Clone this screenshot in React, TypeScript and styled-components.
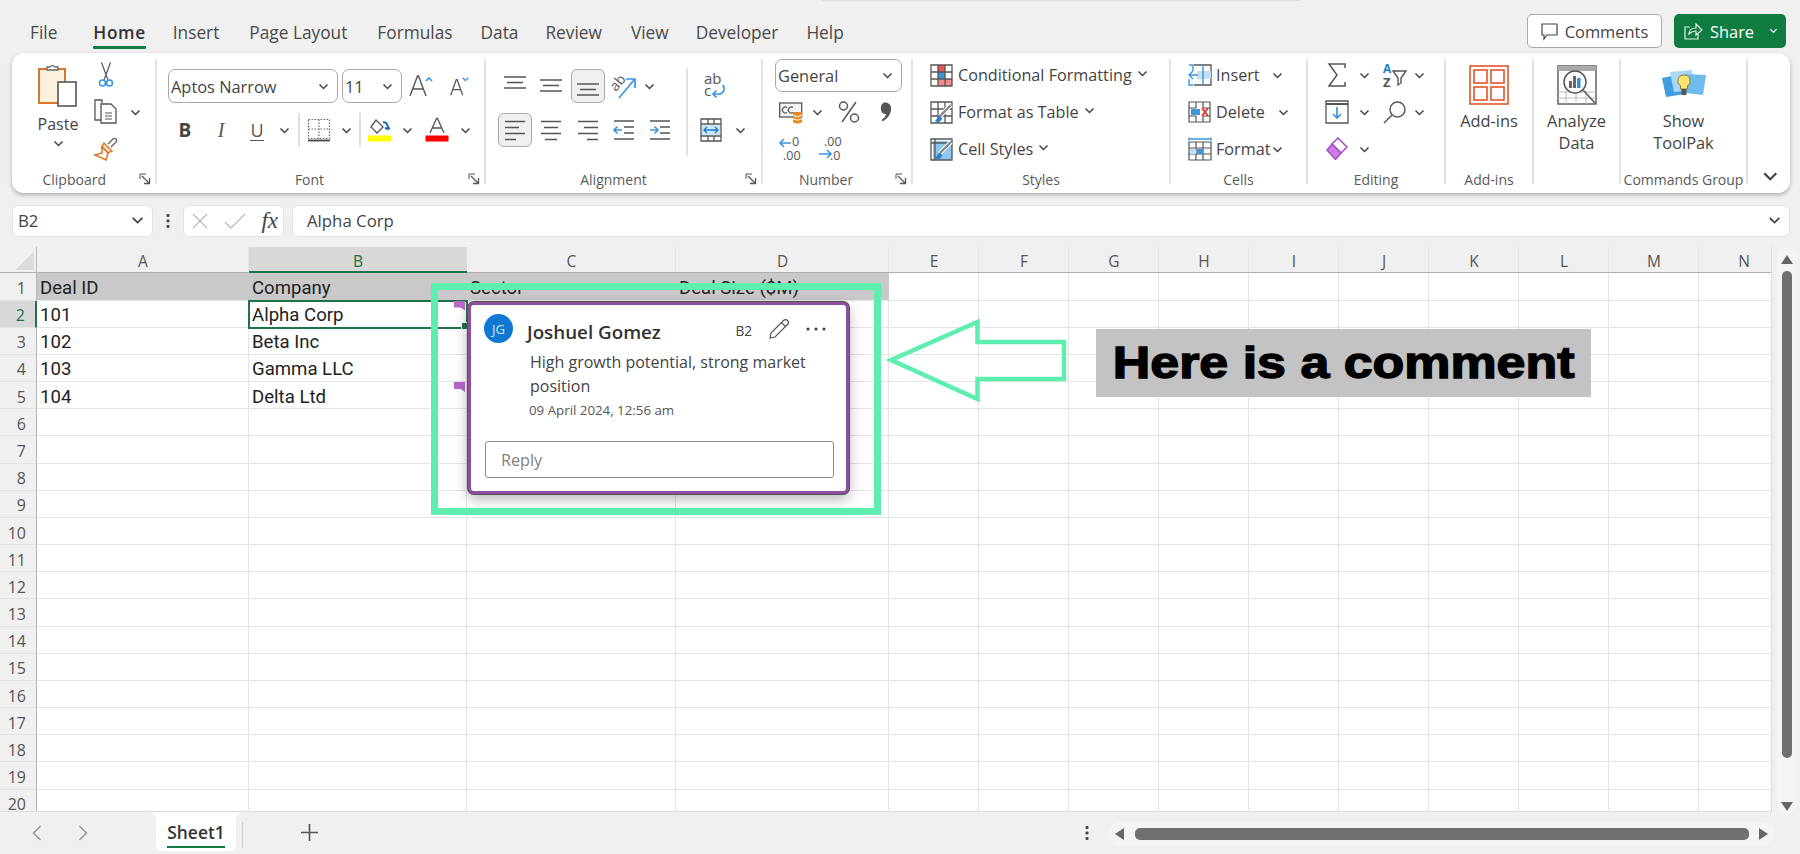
import React from 'react';
import styled, { createGlobalStyle } from 'styled-components';

const UI_FONT = '"Open Sans", "Noto Sans", sans-serif';
const CELL_FONT = 'Roboto, "Liberation Sans", sans-serif';
const GREEN = '#107c41';
const MINT = '#5eefb0';
const BLUE = '#3a96dd';

const GlobalStyle = createGlobalStyle`
  html, body { margin: 0; padding: 0; background: #f0f0f0; overflow: hidden; }
  * { box-sizing: border-box; }
  svg { overflow: visible; }
`;

const Page = styled.div`
  width: 1800px;
  height: 854px;
  background: #f0f0f0;
  font-family: ${UI_FONT};
  color: #444;
  overflow: hidden;
`;

/* ---------- top tabs ---------- */
const TopSliver = styled.div`
  width: 478px;
  height: 1px;
  margin-left: 822px;
  background: #dcdcdc;
`;

const TabRow = styled.div`
  height: 51.6px;
  display: flex;
  align-items: flex-start;
  padding-left: 30px;
`;

const MenuTab = styled.div<{ $active?: boolean; $gap: number }>`
  position: relative;
  margin-right: ${p => p.$gap}px;
  padding-top: 19px;
  font-size: 17.3px;
  line-height: 25px;
  font-weight: ${p => (p.$active ? 600 : 400)};
  letter-spacing: ${p => (p.$active ? '0.6px' : '0')};
  color: ${p => (p.$active ? '#333' : '#4a4a4a')};
`;

const TabMarker = styled.span`
  position: absolute;
  left: 0;
  right: 0;
  top: 45px;
  height: 2.5px;
  border-radius: 1px;
  background: ${GREEN};
`;

const TopActions = styled.div`
  margin-left: auto;
  margin-right: 14px;
  margin-top: 13px;
  display: flex;
  gap: 12px;
`;

const CommentsButton = styled.div`
  width: 135px;
  height: 34px;
  display: flex;
  align-items: center;
  justify-content: center;
  gap: 7px;
  background: #fff;
  border: 1px solid #a9a9a9;
  border-radius: 5px;
  font-size: 16.4px;
`;

const ShareButton = styled.div`
  width: 112px;
  height: 34px;
  display: flex;
  align-items: center;
  padding-left: 10px;
  gap: 7px;
  background: ${GREEN};
  border-radius: 5px;
  font-size: 16.4px;
  color: #fff;
`;

const ShareCaret = styled.span`
  margin-left: auto;
  margin-right: 8px;
  display: flex;
`;

/* ---------- ribbon ---------- */
const Ribbon = styled.div`
  width: 1778.5px;
  height: 140px;
  margin-left: 11.5px;
  padding-top: 6.5px;
  display: flex;
  background: #fff;
  border-radius: 12px;
  box-shadow: 0 2px 4px rgba(0, 0, 0, 0.28);
`;

const Group = styled.div<{ $w: number; $last?: boolean }>`
  position: relative;
  flex: none;
  width: ${p => p.$w}px;
  height: 125px;
  display: flex;
  flex-direction: column;
  border-right: ${p => (p.$last ? 'none' : '2px solid #e3e3e3')};
`;

const GroupBody = styled.div<{ $pl?: number }>`
  height: 111px;
  flex: none;
  display: flex;
  padding-left: ${p => p.$pl ?? 0}px;
`;

const GroupLabel = styled.div<{ $shift?: number }>`
  height: 20px;
  flex: none;
  line-height: 20px;
  font-size: 14px;
  color: #5a5a5a;
  text-align: center;
  white-space: nowrap;
  transform: translateX(${p => p.$shift ?? 0}px);
`;

const Launcher = styled.span`
  position: absolute;
  right: 4px;
  top: 114px;
  display: flex;
`;

const Stack = styled.div`
  display: flex;
  flex-direction: column;
  gap: 5px;
`;

const Row32 = styled.div`
  height: 32px;
  display: flex;
  align-items: center;
  font-size: 16.2px;
  white-space: nowrap;
`;

const TwoRows = styled.div<{ $w?: number; $pl?: number }>`
  padding-top: 10px;
  padding-left: ${p => p.$pl ?? 0}px;
  display: flex;
  flex-direction: column;
  gap: 10px;
  ${p => (p.$w ? `width: ${p.$w}px;` : '')}
`;

const Row34 = styled.div`
  height: 34px;
  display: flex;
  align-items: center;
`;

const Slot = styled.span<{ $w: number; $on?: boolean }>`
  flex: none;
  width: ${p => p.$w}px;
  height: 34px;
  display: flex;
  align-items: center;
  justify-content: center;
  border-radius: 6px;
  ${p => (p.$on ? 'background: #f0f0f0; border: 1px solid #a8a8a8; width: 34px; margin: 0 1.25px;' : '')}
`;

const RowDivider = styled.span<{ $w: number }>`
  flex: none;
  width: ${p => p.$w}px;
  height: 34px;
  display: flex;
  justify-content: center;

  &::before {
    content: '';
    width: 1.5px;
    background: #dedede;
  }
`;

const Select = styled.div<{ $w: number; $h?: number; $ml?: number }>`
  flex: none;
  width: ${p => p.$w}px;
  height: ${p => p.$h ?? 34}px;
  margin-left: ${p => p.$ml ?? 0}px;
  display: flex;
  align-items: center;
  justify-content: space-between;
  padding: 0 8px 0 2px;
  border: 1px solid #a9a9a9;
  border-radius: 7px;
  font-size: 16.4px;
  color: #444;
`;

const PasteColumn = styled.div`
  width: 46px;
  margin-left: 23.5px;
  padding-top: 4px;
  display: flex;
  flex-direction: column;
  align-items: center;
  font-size: 16px;
  line-height: 22px;
`;

const PasteText = styled.div`
  margin-top: 6px;
`;

const PasteCaret = styled.div`
  margin-top: 5px;
  display: flex;
`;

const VerticalRule = styled.div`
  width: 2px;
  height: 88px;
  margin-top: 9px;
  background: #e3e3e3;
`;

const StyleItem = styled(Row32)`
  gap: 5px;
`;

const CaretGap = styled.span`
  margin-bottom: 3px;
  display: flex;
`;

const CellText = styled.span<{ $w: number }>`
  width: ${p => p.$w}px;
  margin-left: 4px;
`;

const BigCommand = styled.div`
  flex: 1;
  padding-top: 6px;
  display: flex;
  flex-direction: column;
  align-items: center;
`;

const BigIcon = styled.div`
  height: 40px;
  display: flex;
  align-items: center;
`;

const BigText = styled.div`
  margin-top: 5px;
  font-size: 16.4px;
  line-height: 22px;
  text-align: center;
`;

const CollapseCaret = styled.div`
  position: absolute;
  right: 12px;
  top: 112px;
  display: flex;
`;

const BoldGlyph = styled.span`
  font-weight: 700;
  font-size: 19px;
  color: #444;
`;

const ItalicGlyph = styled.span`
  font-family: "Liberation Serif", serif;
  font-style: italic;
  font-size: 20px;
  color: #555;
`;

const UnderGlyph = styled.span`
  font-size: 18px;
  color: #555;
  border-bottom: 1.5px solid #555;
  line-height: 20px;
`;

/* ---------- formula bar ---------- */
const FormulaBar = styled.div`
  height: 32px;
  margin: 12px 10px 0 12px;
  display: flex;
  align-items: stretch;
`;

const Field = styled.div<{ $w?: number; $ml?: number }>`
  ${p => (p.$w ? `width: ${p.$w}px; flex: none;` : 'flex: 1;')}
  margin-left: ${p => p.$ml ?? 0}px;
  display: flex;
  align-items: center;
  background: #fff;
  border: 1px solid #e3e3e3;
  border-radius: 6px;
  font-size: 16.8px;
  color: #444;
`;

const NameBox = styled(Field)`
  justify-content: space-between;
  padding: 0 8px 0 5px;
`;

const DotsBox = styled.div<{ $w: number }>`
  width: ${p => p.$w}px;
  display: flex;
  align-items: center;
  justify-content: center;
`;

const FxBox = styled(Field)`
  justify-content: space-between;
  padding: 0 5px 0 8px;
`;

const FxGlyph = styled.span`
  font-family: "Liberation Serif", serif;
  font-style: italic;
  font-size: 23px;
  line-height: 23px;
  color: #444;
`;

const FormulaText = styled(Field)`
  justify-content: space-between;
  padding: 0 8px 0 14px;
`;

/* ---------- sheet ---------- */
const SheetArea = styled.div`
  position: relative;
  height: 565px;
  margin-top: 10px;
  display: flex;
`;

const Sheet = styled.div`
  width: 1772px;
  height: 565px;
  flex: none;
  display: grid;
  grid-template-columns: 37px 212px 218px 209px 213px repeat(10, 90px);
  grid-template-rows: 26.8px repeat(20, 27.18px);
  overflow: hidden;
  background: #fff;
  border-bottom: 1px solid #dcdcdc;
  border-right: 1px solid #dcdcdc;
  font-family: ${CELL_FONT};
`;

const Corner = styled.div`
  background: #f0f0f0;
  border-right: 1.5px solid #b5b5b5;
  border-bottom: 1.5px solid #b0b0b0;
  display: flex;
  align-items: flex-end;
  justify-content: flex-end;
  padding: 0 2px 2px 0;

  &::after {
    content: '';
    width: 19px;
    height: 19px;
    background: #dcdcdc;
    clip-path: polygon(100% 0, 100% 100%, 0 100%);
  }
`;

const ColHead = styled.div<{ $on?: boolean }>`
  display: flex;
  align-items: center;
  justify-content: center;
  padding-top: 3px;
  font-family: ${UI_FONT};
  font-size: 15.5px;
  background: ${p => (p.$on ? '#d8d8d8' : '#f0f0f0')};
  color: ${p => (p.$on ? '#217346' : '#555')};
  border-bottom: ${p => (p.$on ? `2px solid #217346` : '1.5px solid #b0b0b0')};
  box-shadow: ${p => (p.$on ? 'none' : 'inset -1px 0 0 #e6e6e6')};
`;

const RowHead = styled.div<{ $on?: boolean }>`
  display: flex;
  align-items: center;
  justify-content: flex-end;
  padding: 3px 10px 0 0;
  font-family: ${UI_FONT};
  font-size: 16px;
  background: ${p => (p.$on ? '#d8d8d8' : '#f0f0f0')};
  color: ${p => (p.$on ? '#217346' : '#555')};
  border-right: ${p => (p.$on ? `2px solid #217346` : '1.5px solid #b5b5b5')};
  border-bottom: 1px solid #e2e2e2;
`;

const Cell = styled.div<{ $head?: boolean; $selected?: boolean }>`
  position: relative;
  display: flex;
  align-items: center;
  padding: 3px 0 0 3px;
  font-size: 18.6px;
  color: #222;
  white-space: nowrap;
  background: ${p => (p.$head ? '#c9c9c9' : '#fff')};
  border-right: ${p => (p.$head ? 'none' : '1px solid #e4e4e4')};
  border-bottom: 1.5px solid #e4e4e4;
  ${p =>
    p.$selected
      ? `
    outline: 2px solid #217346;
    outline-offset: -1px;
    z-index: 1;
    &::after {
      content: '';
      position: absolute;
      right: -3px;
      bottom: -3px;
      width: 6px;
      height: 6px;
      background: #217346;
      border: 1px solid #fff;
      box-sizing: content-box;
    }`
      : ''}
`;

const CommentMark = styled.span`
  position: absolute;
  right: 1px;
  top: 0;
  width: 11px;
  height: 10px;
  background: #b768c9;
  clip-path: polygon(0 0, 100% 0, 100% 100%, 60% 70%, 0 70%);
  z-index: 2;
`;

const VScroll = styled.div`
  width: 28px;
  padding-left: 1px;
  display: flex;
  justify-content: center;
`;

const VTrack = styled.div`
  width: 20px;
  height: 568px;
  padding: 8px 0 4px;
  display: flex;
  flex-direction: column;
  align-items: center;
  background: #f4f4f4;
  border-radius: 10px;
`;

const ArrowUp = styled.span`
  border-left: 6px solid transparent;
  border-right: 6px solid transparent;
  border-bottom: 9px solid #666;
`;

const ArrowDown = styled.span`
  margin-top: auto;
  border-left: 6px solid transparent;
  border-right: 6px solid transparent;
  border-top: 9px solid #666;
`;

const VThumb = styled.div`
  width: 10px;
  height: 487px;
  margin-top: 7px;
  background: #707070;
  border-radius: 5px;
`;

/* ---------- comment overlay ---------- */
const CalloutFrame = styled.div`
  position: absolute;
  left: 431px;
  top: 36px;
  width: 450px;
  height: 232px;
  border: 7px solid ${MINT};
  z-index: 3;
`;

const CommentCard = styled.div`
  position: absolute;
  left: 30px;
  top: 12px;
  width: 381px;
  height: 192px;
  padding: 9px 20px 0 14px;
  display: flex;
  flex-direction: column;
  background: #fff;
  border: 3px solid #8d4f9e;
  border-radius: 6px;
  box-shadow: 0 0 0 1px #555, 0 5px 14px rgba(0, 0, 0, 0.3);
`;

const CardHead = styled.div`
  height: 30px;
  display: flex;
  align-items: center;
`;

const Avatar = styled.div`
  width: 29px;
  height: 29px;
  margin-left: -1px;
  display: flex;
  align-items: center;
  justify-content: center;
  border-radius: 50%;
  background: #0f78d4;
  color: #d8e9f8;
  font-size: 13px;
`;

const AuthorName = styled.div`
  margin-left: 14px;
  margin-top: 7px;
  font-size: 18.8px;
  font-weight: 600;
  color: #333;
`;

const CellRef = styled.div`
  margin-left: auto;
  margin-top: 3px;
  font-size: 13.6px;
  color: #444;
`;

const CardAction = styled.span<{ $w: number }>`
  width: ${p => p.$w}px;
  display: flex;
  justify-content: flex-end;
`;

const CommentBody = styled.div`
  margin: 6px 0 0 45px;
  font-size: 16px;
  line-height: 24px;
  color: #444;
`;

const CommentDate = styled.div`
  margin: 3px 0 0 44px;
  font-size: 13.3px;
  line-height: 18px;
  color: #555;
`;

const ReplyBox = styled.div`
  width: 349px;
  height: 37px;
  margin-top: 22px;
  padding: 2px 0 0 15px;
  display: flex;
  align-items: center;
  border: 1px solid #8c8c8c;
  border-radius: 3px;
  font-size: 16.2px;
  color: #808080;
`;

const BigArrow = styled.svg`
  position: absolute;
  left: 885px;
  top: 72px;
  z-index: 3;
`;

const Banner = styled.div`
  position: absolute;
  left: 1096px;
  top: 82px;
  width: 495px;
  height: 68px;
  display: flex;
  align-items: center;
  justify-content: center;
  background: #c3c3c3;
  z-index: 3;
`;

const BannerText = styled.span`
  display: inline-block;
  color: #000;
  font-family: "Liberation Sans", Arial, sans-serif;
  font-weight: 700;
  font-size: 44px;
  -webkit-text-stroke: 1.4px #000;
  white-space: nowrap;
  transform: scaleX(1.18);
`;

/* ---------- bottom bar ---------- */
const BottomBar = styled.div`
  height: 42px;
  display: flex;
  align-items: flex-start;
  padding-left: 26px;
`;

const NavArrow = styled.span<{ $mr: number }>`
  width: 22px;
  height: 42px;
  margin-right: ${p => p.$mr}px;
  display: flex;
  align-items: center;
  justify-content: center;
`;

const SheetTab = styled.div`
  position: relative;
  width: 80px;
  height: 39px;
  padding-top: 8px;
  text-align: center;
  background: #fff;
  border-radius: 0 0 6px 6px;
  font-size: 17.4px;
  line-height: 24px;
  font-weight: 600;
  color: #333;

  &::before,
  &::after {
    content: '';
    position: absolute;
    top: 0;
    width: 8px;
    height: 8px;
  }

  &::before {
    left: -8px;
    background: radial-gradient(circle at 0 100%, #f0f0f0 7.5px, #fff 8px);
  }

  &::after {
    right: -8px;
    background: radial-gradient(circle at 100% 100%, #f0f0f0 7.5px, #fff 8px);
  }
`;

const TabUnderline = styled.div`
  width: 58px;
  height: 2.5px;
  margin: 2px auto 0;
  background: ${GREEN};
`;

const TabSeparator = styled.div`
  width: 1px;
  height: 26px;
  margin: 10px 0 0 6px;
  background: #c8c8c8;
`;

const PlusButton = styled.span`
  margin-left: 58px;
  height: 42px;
  display: flex;
  align-items: center;
`;

const BottomDots = styled.span`
  margin-left: auto;
  height: 42px;
  margin-right: 19px;
  display: flex;
  align-items: center;
`;

const HTrack = styled.div`
  width: 667px;
  height: 24px;
  margin-top: 10px;
  margin-right: 25px;
  padding: 0 7px;
  display: flex;
  align-items: center;
  justify-content: space-between;
  background: #f4f4f4;
  border-radius: 12px;
`;

const ArrowLeft = styled.span`
  border-top: 6px solid transparent;
  border-bottom: 6px solid transparent;
  border-right: 9px solid #666;
`;

const ArrowRight = styled.span`
  border-top: 6px solid transparent;
  border-bottom: 6px solid transparent;
  border-left: 9px solid #666;
`;

const HThumb = styled.div`
  width: 614px;
  height: 12px;
  background: #707070;
  border-radius: 5px;
`;

/* ---------- icons ---------- */
const Caret = ({ c = '#444', s = 1 }: { c?: string; s?: number }) => (
  <svg width={11 * s} height={7 * s} viewBox="0 0 11 7">
    <path d="M1.5 1.5 5.5 5.5 9.5 1.5" fill="none" stroke={c} strokeWidth="1.5" />
  </svg>
);

const LauncherIcon = () => (
  <svg width="12" height="12" viewBox="0 0 12 12" fill="none" stroke="#555" strokeWidth="1">
    <path d="M1 6V1h6" />
    <path d="M3 3l7 7M5 10.5h5.5V5" strokeWidth="1.3" />
  </svg>
);

const PasteIcon = () => (
  <svg width="40" height="44" viewBox="0 0 40 44" fill="none">
    <rect x="1" y="6" width="26" height="34" fill="#fdf0dc" stroke="#d9772b" strokeWidth="2" />
    <path d="M9 7V4h3a3 3 0 0 1 5 0h3v3z" fill="#fff" stroke="#666" strokeWidth="1.3" />
    <rect x="20" y="19" width="18" height="24" fill="#fff" stroke="#555" strokeWidth="1.6" />
  </svg>
);

const ScissorsIcon = () => (
  <svg width="16" height="26" viewBox="0 0 16 26" fill="none">
    <path d="M3.5 0.5 10 18M12.5 0.5 6 18" stroke="#555" strokeWidth="1.2" />
    <circle cx="4.5" cy="21" r="3" stroke={BLUE} strokeWidth="1.6" />
    <circle cx="11.5" cy="21" r="3" stroke={BLUE} strokeWidth="1.6" />
  </svg>
);

const CopyIcon = () => (
  <svg width="24" height="26" viewBox="0 0 24 26" fill="none" stroke="#555" strokeWidth="1.3">
    <path d="M8 4V1H1v20h6" />
    <path d="M7 5h10l5 5v14H7z" fill="#fff" />
    <path d="M11 14h7M11 17h7M11 20h7" strokeWidth="1" />
  </svg>
);

const BrushIcon = () => (
  <svg width="24" height="26" viewBox="0 0 24 26" fill="none">
    <path d="M14 8l5-5a2 2 0 0 1 3 3l-5 5" stroke="#666" strokeWidth="1.4" />
    <path d="M10 7l8 8-4 2-6-6z" fill="#f5d9b5" stroke="#d9772b" strokeWidth="1.4" />
    <path d="M8 11l6 6-2 7-11-5 7-2z" fill="#fff" stroke="#d9772b" strokeWidth="1.6" />
  </svg>
);

const GrowFont = ({ up }: { up: boolean }) => (
  <svg width={up ? 24 : 22} height="24" viewBox="0 0 24 24" fill="none">
    <path d={up ? 'M1 22 8.5 2h1L17 22M4 15h10' : 'M3 22 9 5h1l6 17M5.5 16h8'} stroke="#555" strokeWidth="1.4" />
    <path d={up ? 'M17 7l3-3 3 3' : 'M16 3l3 3 3-3'} stroke={BLUE} strokeWidth="1.6" />
  </svg>
);

const BorderIcon = () => (
  <svg width="24" height="24" viewBox="0 0 24 24" fill="none" stroke="#666" strokeWidth="1.2">
    <path d="M1.5 1.5h21v19h-21zM12 1.5v19M1.5 11h21" strokeDasharray="1.5 1.5" />
    <path d="M1 22.5h22" strokeWidth="1.8" stroke="#444" />
  </svg>
);

const FillIcon = () => (
  <svg width="24" height="24" viewBox="0 0 24 24" fill="none">
    <path d="M8 2l7 7-6 6-6-6z" stroke="#555" strokeWidth="1.3" />
    <path d="M15 4c3 0 5 2 5 7l2-1M20 11l-3-1" stroke="#1e6fb8" strokeWidth="2" />
    <rect x="0" y="17.5" width="23" height="6" fill="#ffff00" />
  </svg>
);

const FontColorIcon = () => (
  <svg width="24" height="24" viewBox="0 0 24 24" fill="none">
    <path d="M5 15 11.5 0.5h1L19 15M7.5 10h9" stroke="#555" strokeWidth="1.3" />
    <rect x="0.5" y="17.5" width="23" height="6" fill="#f00" />
  </svg>
);

const Lines = ({ v }: { v: 'top' | 'mid' | 'bot' }) => {
  const y = v === 'top' ? 2 : v === 'mid' ? 5 : 9;
  return (
    <svg width="22" height="22" viewBox="0 0 22 22" stroke="#555" strokeWidth="1.6">
      <path d={`M0 ${y}h22M3 ${y + 5.5}h16M0 ${y + 11}h22`} />
    </svg>
  );
};

const AlignLeftLines = () => (
  <svg width="22" height="22" viewBox="0 0 22 22" stroke="#555" strokeWidth="1.6">
    <path d="M1 2.5h20M1 8.5h14M1 14.5h20M1 20.5h11" />
  </svg>
);

const AlignCenterLines = () => (
  <svg width="22" height="22" viewBox="0 0 22 22" stroke="#555" strokeWidth="1.6">
    <path d="M1 2.5h20M4 8.5h14M1 14.5h20M5 20.5h12" />
  </svg>
);

const AlignRightLines = () => (
  <svg width="22" height="22" viewBox="0 0 22 22" stroke="#555" strokeWidth="1.6">
    <path d="M1 2.5h20M7 8.5h14M1 14.5h20M10 20.5h11" />
  </svg>
);

const OrientIcon = () => (
  <svg width="26" height="26" viewBox="0 0 26 26" fill="none">
    <text x="0" y="0" fontSize="14" fill="#555" fontFamily="Open Sans" transform="translate(5 19) rotate(-50)">ab</text>
    <path d="M8 25 23 7M15 6h9v9" stroke={BLUE} strokeWidth="1.7" />
  </svg>
);

const IndentIcon = ({ inward }: { inward: boolean }) => (
  <svg width="22" height="22" viewBox="0 0 22 22" fill="none">
    <path d="M1 2h20M11 8h10M11 14h10M1 20h20" stroke="#555" strokeWidth="1.6" />
    <path d={inward ? 'M1 11h8M4.5 7.5 1 11l3.5 3.5' : 'M1 11h8M5.5 7.5 9 11l-3.5 3.5'} stroke={BLUE} strokeWidth="1.7" />
  </svg>
);

const WrapIcon = () => (
  <svg width="22" height="26" viewBox="0 0 22 26" fill="none">
    <text x="1" y="11" fontSize="15" fill="#555" fontFamily="Open Sans">ab</text>
    <text x="1" y="23" fontSize="15" fill="#555" fontFamily="Open Sans">c</text>
    <path d="M20 12c2.5 5 0 9-4 9H10M13.5 17.5 10 21l3.5 3.5" stroke={BLUE} strokeWidth="1.7" />
  </svg>
);

const MergeIcon = () => (
  <svg width="22" height="24" viewBox="0 0 22 24" fill="none">
    <path d="M1 1h20v22H1zM1 6h20M1 18h20M8 1v5M14 1v5M8 18v5M14 18v5" stroke="#555" strokeWidth="1.3" />
    <rect x="2" y="7" width="18" height="10" fill="#cde6f7" />
    <path d="M4 12h14M7 9l-3 3 3 3M15 9l3 3-3 3" stroke="#1e7fc8" strokeWidth="1.4" />
  </svg>
);

const CurrencyIcon = () => (
  <svg width="24" height="24" viewBox="0 0 24 24" fill="none">
    <rect x="0.7" y="3" width="22" height="14" fill="#f5f5f5" stroke="#555" strokeWidth="1.3" />
    <path d="M8 7.5a3 3 0 1 0 0 5M14 7.5a3 3 0 1 0 0 5" stroke="#555" strokeWidth="1.2" />
    <path d="M14 12h9v10c-2 2-7 2-9 0z" fill="#e98a1f" />
    <path d="M14 15c2 2 7 2 9 0M14 18.5c2 2 7 2 9 0" stroke="#fff" />
  </svg>
);

const PercentGlyph = () => (
  <svg width="22" height="24" viewBox="0 0 22 24" fill="none" stroke="#555" strokeWidth="1.5">
    <path d="M18 2 4 22" />
    <circle cx="5.5" cy="6" r="4" />
    <circle cx="16.5" cy="18" r="4" />
  </svg>
);

const CommaGlyph = () => (
  <svg width="12" height="20" viewBox="0 0 14 22">
    <path d="M6 0c4 0 7 3 7 7 0 6-4 12-10 15l-1-2c3-2 5-4 5-7-3 1-6-2-6-6 0-4 2-7 5-7z" fill="#555" />
  </svg>
);

const DecimalIcon = ({ more }: { more: boolean }) => (
  <svg width="24" height="26" viewBox="0 0 24 26" fill="none">
    <text x={more ? 13 : 6} y="10" fontSize="12.5" fill="#555" fontFamily="Open Sans">{more ? '0' : '.00'}</text>
    <text x={more ? 4 : 12} y="24" fontSize="12.5" fill="#555" fontFamily="Open Sans">{more ? '.00' : '.0'}</text>
    <path d={more ? 'M12 7H1M5 3 1 7l4 4' : 'M1 18h12M9 14l4 4-4 4'} stroke={BLUE} strokeWidth="1.6" />
  </svg>
);

const grid = 'M1 1h21v21H1zM1 8h21M1 15h21M8 1v21M15 1v21';

const CondFormatIcon = () => (
  <svg width="23" height="23" viewBox="0 0 23 23" fill="none">
    <rect x="8" y="1" width="7" height="7" fill="#ef5350" />
    <rect x="8" y="8" width="7" height="7" fill="#3a96dd" />
    <rect x="8" y="15" width="14" height="7" fill="#f48b8b" />
    <path d={grid} stroke="#555" strokeWidth="1.3" />
  </svg>
);

const TableIcon = ({ fill }: { fill?: boolean }) => (
  <svg width="23" height="23" viewBox="0 0 23 23" fill="none">
    {fill && <rect x="3" y="3" width="19" height="19" fill="#8cc8f0" />}
    <path d={fill ? 'M1 1h21v21H1zM1 5h21M5 1v21' : grid} stroke="#555" strokeWidth="1.3" />
    <path d="M21 4 10 15" stroke="#fff" strokeWidth="4.5" />
    <path d="M21 4 10 15" stroke="#888" strokeWidth="2.4" />
    <path d="M10 15c-3 0-3 4-5 5 2 2 7 1 7-3z" fill="#2f7fc4" />
  </svg>
);

const InsertIcon = () => (
  <svg width="24" height="22" viewBox="0 0 24 22" fill="none">
    <path d="M6 1h17v20H6" stroke="#555" strokeWidth="1.3" />
    <rect x="9" y="7" width="14" height="8" fill="#bfe0f7" />
    <path d="M1 1h4v6M1 15v6h4M10 11H1M5 7l-4 4 4 4M15 1v20" stroke={BLUE} strokeWidth="1.4" />
  </svg>
);

const DeleteIcon = () => (
  <svg width="24" height="22" viewBox="0 0 24 22" fill="none">
    <path d="M1 1h21v20H1zM1 7h7M15 7h7M1 15h7M15 15h7M8 1v6M15 1v6M8 15v6M15 15v6" stroke="#555" strokeWidth="1.2" />
    <rect x="3" y="8" width="9" height="6" fill="#3a96dd" />
    <path d="M14 7l6 8M20 7l-6 8" stroke="#e23b2e" strokeWidth="1.9" />
  </svg>
);

const FormatCellsIcon = () => (
  <svg width="24" height="24" viewBox="0 0 24 24" fill="none">
    <path d="M1 5h22v18H1zM1 11h22M1 17h22M8 5v18M15 5v18" stroke="#555" strokeWidth="1.2" />
    <rect x="9" y="12" width="6" height="5" fill="#3a96dd" />
    <rect x="2" y="12" width="6" height="5" fill="#bfe0f7" />
    <path d="M1 2h22M1 0.5v3M23 0.5v3" stroke={BLUE} strokeWidth="1.4" />
  </svg>
);

const SigmaIcon = () => (
  <svg width="20" height="24" viewBox="0 0 20 24" fill="none">
    <path d="M18 5V1H2l8 11-8 11h16v-4" stroke="#555" strokeWidth="1.5" />
  </svg>
);

const SortIcon = () => (
  <svg width="24" height="26" viewBox="0 0 24 26" fill="none">
    <text x="0" y="11" fontSize="12" fontWeight="700" fill="#1e7fc8" fontFamily="Open Sans">A</text>
    <text x="0" y="25" fontSize="13" fontWeight="700" fill="#555" fontFamily="Open Sans">Z</text>
    <path d="M10 9h13l-5 7v5l-3 2v-7z" stroke="#555" strokeWidth="1.4" />
  </svg>
);

const FillDownIcon = () => (
  <svg width="24" height="24" viewBox="0 0 24 24" fill="none">
    <path d="M1 1h22v22H1z" stroke="#555" strokeWidth="1.3" />
    <path d="M1 4h22" stroke="#555" strokeWidth="2" />
    <path d="M12 7v11M8 14l4 4 4-4" stroke={BLUE} strokeWidth="1.7" />
  </svg>
);

const FindIcon = () => (
  <svg width="24" height="24" viewBox="0 0 24 24" fill="none" stroke="#555" strokeWidth="1.4">
    <circle cx="14.5" cy="9.5" r="7.5" />
    <path d="M9 15 1 23" />
  </svg>
);

const EraserIcon = () => (
  <svg width="22" height="24" viewBox="0 0 22 24" fill="none">
    <path d="M12 1l9 9-6 6-9-9z" fill="#fff" stroke="#a64ac9" strokeWidth="1.5" />
    <path d="M6 7l9 9-5 6a1 1 0 0 1-1 0l-8-9z" fill="#c77fe0" stroke="#a64ac9" strokeWidth="1.5" />
  </svg>
);

const AddInsIcon = () => (
  <svg width="40" height="40" viewBox="0 0 40 40" fill="none" stroke="#e2552b" strokeWidth="1.6">
    <rect x="1" y="1" width="38" height="38" />
    <rect x="5" y="5" width="13" height="13" />
    <rect x="22" y="5" width="13" height="13" />
    <rect x="5" y="22" width="13" height="13" />
    <rect x="22" y="22" width="13" height="13" />
  </svg>
);

const AnalyzeIcon = () => (
  <svg width="40" height="40" viewBox="0 0 40 40" fill="none">
    <rect x="1" y="1" width="38" height="38" fill="#fff" stroke="#555" strokeWidth="1.4" />
    <rect x="1" y="1" width="38" height="5" fill="#aaa" />
    <path d="M1 27h38M1 33h38M9 26v13M19 26v13M29 26v13" stroke="#bbb" />
    <circle cx="18" cy="17" r="11" fill="#fff" stroke="#555" strokeWidth="1.5" />
    <path d="M26 25l12 13" stroke="#666" strokeWidth="1.8" />
    <rect x="12" y="16" width="3" height="7" fill="#666" />
    <rect x="16" y="11" width="3" height="12" fill="#666" />
    <rect x="20" y="13" width="3.5" height="10" fill="#2f8fdc" />
  </svg>
);

const ToolPakIcon = () => (
  <svg width="44" height="32" viewBox="0 0 44 32" fill="none">
    <path d="M0 9 20 5l3 20-19 3z" fill="#3f9ee0" />
    <path d="M8 3 30 1l2 20-20 2z" fill="#a8d8f5" />
    <path d="M24 5l20 1-3 20-17-2z" fill="#6dbcec" />
    <path d="M22 6a6 6 0 0 1 3.5 11v3h-7v-3A6 6 0 0 1 22 6z" fill="#fbe46d" stroke="#8a7a30" />
    <rect x="19.5" y="20" width="5" height="6" fill="#555" />
  </svg>
);

const BubbleIcon = () => (
  <svg width="17" height="17" viewBox="0 0 17 17" fill="none" stroke="#444" strokeWidth="1.2">
    <path d="M1 1h15v11H6l-3 4v-4H1z" />
  </svg>
);

const ShareIcon = () => (
  <svg width="19" height="18" viewBox="0 0 19 18" fill="none" stroke="#dff0e6" strokeWidth="1.2">
    <path d="M6 5H1v12h13v-5" />
    <path d="M5 12c0-4 3-6 7-6V2l6 6-6 5V9c-3 0-5 1-7 3z" />
  </svg>
);

const VDots = () => (
  <svg width="4" height="16" viewBox="0 0 4 16" fill="#444">
    <rect x="0.5" y="1" width="3" height="3" rx="1" />
    <rect x="0.5" y="6.5" width="3" height="3" rx="1" />
    <rect x="0.5" y="12" width="3" height="3" rx="1" />
  </svg>
);

const CrossIcon = () => (
  <svg width="16" height="16" viewBox="0 0 16 16" stroke="#bdbdbd" strokeWidth="1.4">
    <path d="M1 1l14 14M15 1 1 15" />
  </svg>
);

const CheckIcon = () => (
  <svg width="22" height="16" viewBox="0 0 22 16" fill="none" stroke="#bdbdbd" strokeWidth="1.4">
    <path d="M1 9l6 6L21 1" />
  </svg>
);

const PencilIcon = () => (
  <svg width="22" height="22" viewBox="0 0 22 22" fill="none" stroke="#555" strokeWidth="1.2">
    <path d="M15.5 2.5a2.5 2.5 0 0 1 4 4L7 19l-5 1 1-5zM13.5 4.5l4 4" />
  </svg>
);

const HDots = () => (
  <svg width="20" height="4" viewBox="0 0 20 4" fill="#444">
    <circle cx="2" cy="2" r="1.6" />
    <circle cx="10" cy="2" r="1.6" />
    <circle cx="18" cy="2" r="1.6" />
  </svg>
);

const NavGlyph = ({ d }: { d: string }) => (
  <svg width="10" height="16" viewBox="0 0 10 16" fill="none" stroke="#999" strokeWidth="1.6">
    <path d={d} />
  </svg>
);

const PlusGlyph = () => (
  <svg width="17" height="17" viewBox="0 0 17 17" stroke="#555" strokeWidth="1.6">
    <path d="M8.5 0v17M0 8.5h17" />
  </svg>
);

/* ---------- data ---------- */
const tabs: [string, number, boolean?][] = [
  ['File', 36],
  ['Home', 27, true],
  ['Insert', 30],
  ['Page Layout', 30],
  ['Formulas', 28],
  ['Data', 27],
  ['Review', 29],
  ['View', 27],
  ['Developer', 28],
  ['Help', 0],
];

const columns = ['A', 'B', 'C', 'D', 'E', 'F', 'G', 'H', 'I', 'J', 'K', 'L', 'M', 'N'];

const cells: Record<number, string[]> = {
  1: ['Deal ID', 'Company', 'Sector', 'Deal Size ($M)'],
  2: ['101', 'Alpha Corp'],
  3: ['102', 'Beta Inc'],
  4: ['103', 'Gamma LLC'],
  5: ['104', 'Delta Ltd'],
};

const rowNumbers = Array.from({ length: 20 }, (_, i) => i + 1);

const Spreadsheet = () => (
  <Sheet>
    <Corner />
    {columns.map(c => (
      <ColHead key={c} $on={c === 'B'}>{c}</ColHead>
    ))}
    {rowNumbers.map(r => (
      <React.Fragment key={r}>
        <RowHead $on={r === 2}>{r}</RowHead>
        {columns.map((c, i) => (
          <Cell key={c} $head={r === 1 && i < 4} $selected={r === 2 && c === 'B'}>
            {cells[r]?.[i]}
            {(r === 2 || r === 5) && c === 'B' && <CommentMark />}
          </Cell>
        ))}
      </React.Fragment>
    ))}
  </Sheet>
);

const ClipboardGroup = () => (
  <Group $w={145.5}>
    <GroupBody>
      <PasteColumn>
        <PasteIcon />
        <PasteText>Paste</PasteText>
        <PasteCaret><Caret /></PasteCaret>
      </PasteColumn>
      <Stack>
        <Row32><Slot $w={49}><ScissorsIcon /></Slot></Row32>
        <Row32><Slot $w={49}><CopyIcon /></Slot><Caret /></Row32>
        <Row32><Slot $w={49}><BrushIcon /></Slot></Row32>
      </Stack>
    </GroupBody>
    <GroupLabel $shift={-9}>Clipboard</GroupLabel>
    <Launcher><LauncherIcon /></Launcher>
  </Group>
);

const FontGroup = () => (
  <Group $w={329}>
    <GroupBody>
      <TwoRows $pl={10}>
        <Row34>
          <Select $w={170} $ml={1}>Aptos Narrow<Caret /></Select>
          <Select $w={60} $ml={4}>11<Caret /></Select>
          <Slot $w={38}><GrowFont up /></Slot>
          <Slot $w={38}><GrowFont up={false} /></Slot>
        </Row34>
        <Row34>
          <Slot $w={36}><BoldGlyph>B</BoldGlyph></Slot>
          <Slot $w={36}><ItalicGlyph>I</ItalicGlyph></Slot>
          <Slot $w={36}><UnderGlyph>U</UnderGlyph></Slot>
          <Slot $w={18}><Caret /></Slot>
          <RowDivider $w={12} />
          <Slot $w={28}><BorderIcon /></Slot>
          <Slot $w={26}><Caret /></Slot>
          <RowDivider $w={2} />
          <Slot $w={38}><FillIcon /></Slot>
          <Slot $w={16}><Caret /></Slot>
          <Slot $w={44}><FontColorIcon /></Slot>
          <Slot $w={12}><Caret /></Slot>
        </Row34>
      </TwoRows>
    </GroupBody>
    <GroupLabel $shift={-11}>Font</GroupLabel>
    <Launcher><LauncherIcon /></Launcher>
  </Group>
);

const AlignmentGroup = () => (
  <Group $w={277}>
    <GroupBody>
      <TwoRows $pl={10.5} $w={200}>
        <Row34>
          <Slot $w={36.5}><Lines v="top" /></Slot>
          <Slot $w={36.5}><Lines v="mid" /></Slot>
          <Slot $w={36.5} $on><Lines v="bot" /></Slot>
          <Slot $w={36}><OrientIcon /></Slot>
          <Slot $w={14}><Caret /></Slot>
        </Row34>
        <Row34>
          <Slot $w={36.5} $on><AlignLeftLines /></Slot>
          <Slot $w={36.5}><AlignCenterLines /></Slot>
          <Slot $w={36.5}><AlignRightLines /></Slot>
          <Slot $w={36}><IndentIcon inward /></Slot>
          <Slot $w={36}><IndentIcon inward={false} /></Slot>
        </Row34>
      </TwoRows>
      <VerticalRule />
      <TwoRows>
        <Row34><Slot $w={52}><WrapIcon /></Slot></Row34>
        <Row34>
          <Slot $w={46}><MergeIcon /></Slot>
          <Slot $w={12}><Caret /></Slot>
        </Row34>
      </TwoRows>
    </GroupBody>
    <GroupLabel $shift={-10}>Alignment</GroupLabel>
    <Launcher><LauncherIcon /></Launcher>
  </Group>
);

const NumberGroup = () => (
  <Group $w={150}>
    <GroupBody $pl={12}>
      <Stack>
        <Row32><Select $w={127} $h={33}>General<Caret /></Select></Row32>
        <Row32>
          <Slot $w={32}><CurrencyIcon /></Slot>
          <Slot $w={20}><Caret /></Slot>
          <Slot $w={44}><PercentGlyph /></Slot>
          <Slot $w={30}><CommaGlyph /></Slot>
        </Row32>
        <Row32>
          <Slot $w={32}><DecimalIcon more /></Slot>
          <Slot $w={46}><DecimalIcon more={false} /></Slot>
        </Row32>
      </Stack>
    </GroupBody>
    <GroupLabel $shift={-11}>Number</GroupLabel>
    <Launcher><LauncherIcon /></Launcher>
  </Group>
);

const StylesGroup = () => (
  <Group $w={258}>
    <GroupBody $pl={17}>
      <Stack>
        <StyleItem><CondFormatIcon />Conditional Formatting<CaretGap><Caret /></CaretGap></StyleItem>
        <StyleItem><TableIcon />Format as Table<CaretGap><Caret /></CaretGap></StyleItem>
        <StyleItem><TableIcon fill />Cell Styles<CaretGap><Caret /></CaretGap></StyleItem>
      </Stack>
    </GroupBody>
    <GroupLabel>Styles</GroupLabel>
  </Group>
);

const CellsGroup = () => (
  <Group $w={137}>
    <GroupBody $pl={17}>
      <Stack>
        <Row32><InsertIcon /><CellText $w={56}>Insert</CellText><Caret /></Row32>
        <Row32><DeleteIcon /><CellText $w={62}>Delete</CellText><Caret /></Row32>
        <Row32><FormatCellsIcon /><CellText $w={56}>Format</CellText><Caret /></Row32>
      </Stack>
    </GroupBody>
    <GroupLabel>Cells</GroupLabel>
  </Group>
);

const EditingGroup = () => (
  <Group $w={138}>
    <GroupBody $pl={12}>
      <Stack>
        <Row32>
          <Slot $w={34}><SigmaIcon /></Slot>
          <Slot $w={21}><Caret /></Slot>
          <Slot $w={40}><SortIcon /></Slot>
          <Slot $w={8}><Caret /></Slot>
        </Row32>
        <Row32>
          <Slot $w={34}><FillDownIcon /></Slot>
          <Slot $w={21}><Caret /></Slot>
          <Slot $w={40}><FindIcon /></Slot>
          <Slot $w={8}><Caret /></Slot>
        </Row32>
        <Row32>
          <Slot $w={34}><EraserIcon /></Slot>
          <Slot $w={21}><Caret /></Slot>
        </Row32>
      </Stack>
    </GroupBody>
    <GroupLabel>Editing</GroupLabel>
  </Group>
);

export default function App() {
  return (
    <Page>
      <GlobalStyle />
      <TopSliver />
      <TabRow>
        {tabs.map(([label, gap, active]) => (
          <MenuTab key={label} $gap={gap} $active={active}>
            {label}
            {active && <TabMarker />}
          </MenuTab>
        ))}
        <TopActions>
          <CommentsButton><BubbleIcon />Comments</CommentsButton>
          <ShareButton>
            <ShareIcon />Share
            <ShareCaret><Caret c="#fff" s={0.8} /></ShareCaret>
          </ShareButton>
        </TopActions>
      </TabRow>

      <Ribbon>
        <ClipboardGroup />
        <FontGroup />
        <AlignmentGroup />
        <NumberGroup />
        <StylesGroup />
        <CellsGroup />
        <EditingGroup />
        <Group $w={88}>
          <GroupBody>
            <BigCommand><BigIcon><AddInsIcon /></BigIcon><BigText>Add-ins</BigText></BigCommand>
          </GroupBody>
          <GroupLabel>Add-ins</GroupLabel>
        </Group>
        <Group $w={87}>
          <GroupBody>
            <BigCommand><BigIcon><AnalyzeIcon /></BigIcon><BigText>Analyze<br />Data</BigText></BigCommand>
          </GroupBody>
        </Group>
        <Group $w={127}>
          <GroupBody>
            <BigCommand><BigIcon><ToolPakIcon /></BigIcon><BigText>Show<br />ToolPak</BigText></BigCommand>
          </GroupBody>
          <GroupLabel>Commands Group</GroupLabel>
        </Group>
        <Group $w={42} $last>
          <CollapseCaret><Caret s={1.5} /></CollapseCaret>
        </Group>
      </Ribbon>

      <FormulaBar>
        <NameBox $w={141}>B2<Caret s={1.2} /></NameBox>
        <DotsBox $w={30}><VDots /></DotsBox>
        <FxBox $w={101}><CrossIcon /><CheckIcon /><FxGlyph>fx</FxGlyph></FxBox>
        <FormulaText $ml={8}>Alpha Corp<Caret s={1.2} /></FormulaText>
      </FormulaBar>

      <SheetArea>
        <Spreadsheet />
        <VScroll>
          <VTrack>
            <ArrowUp />
            <VThumb />
            <ArrowDown />
          </VTrack>
        </VScroll>

        <CalloutFrame>
          <CommentCard>
            <CardHead>
              <Avatar>JG</Avatar>
              <AuthorName>Joshuel Gomez</AuthorName>
              <CellRef>B2</CellRef>
              <CardAction $w={38}><PencilIcon /></CardAction>
              <CardAction $w={36}><HDots /></CardAction>
            </CardHead>
            <CommentBody>High growth potential, strong market<br />position</CommentBody>
            <CommentDate>09 April 2024, 12:56 am</CommentDate>
            <ReplyBox>Reply</ReplyBox>
          </CommentCard>
        </CalloutFrame>

        <BigArrow width="184" height="84" viewBox="0 0 184 84" fill="none">
          <path d="M6 41 92.5 3V23H179V60H92.5V80Z" stroke={MINT} strokeWidth="4.5" />
        </BigArrow>
        <Banner><BannerText>Here is a comment</BannerText></Banner>
      </SheetArea>

      <BottomBar>
        <NavArrow $mr={24}><NavGlyph d="M8.5 1 1.5 8l7 7" /></NavArrow>
        <NavArrow $mr={62}><NavGlyph d="M1.5 1l7 7-7 7" /></NavArrow>
        <SheetTab>Sheet1<TabUnderline /></SheetTab>
        <TabSeparator />
        <PlusButton><PlusGlyph /></PlusButton>
        <BottomDots><VDots /></BottomDots>
        <HTrack>
          <ArrowLeft />
          <HThumb />
          <ArrowRight />
        </HTrack>
      </BottomBar>
    </Page>
  );
}
